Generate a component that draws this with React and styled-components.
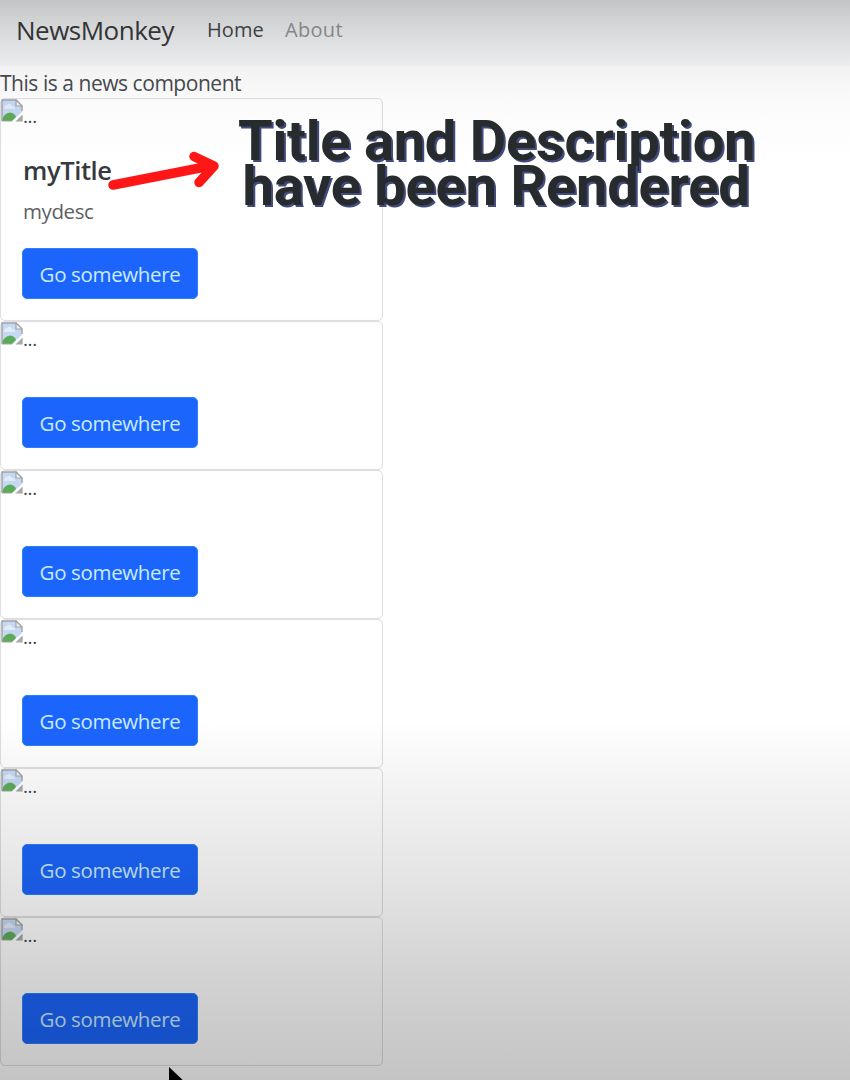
import React from "react";
import styled, { createGlobalStyle } from "styled-components";

const GlobalStyle = createGlobalStyle`
  * { box-sizing: border-box; }
  html, body { margin: 0; padding: 0; }
  body {
    background: #fff;
    color: #212529;
    font-family: "Open Sans", "Noto Sans", sans-serif;
    font-size: 21px;
    line-height: 32px;
    overflow: hidden;
  }
`;

const Page = styled.div`
  position: relative;
  height: 1080px;
  overflow: hidden;
`;

const Navbar = styled.nav`
  display: flex;
  align-items: center;
  height: 66px;
  padding: 0 16px 6px;
  background: #f8f9fa;
`;

const Brand = styled.a`
  width: 191px;
  font-size: 26px;
  letter-spacing: -0.5px;
  color: #3a3c40;
`;

const NavItem = styled.a`
  width: 78px;
  font-size: 20px;
  letter-spacing: ${(p) => p.$spacing}px;
  color: ${(p) => (p.$active ? "#484a4e" : "#98999b")};
`;

const NewsLine = styled.div`
  height: 32px;
  padding-top: 1px;
  color: #484b50;
  letter-spacing: -0.46px;
  white-space: nowrap;
`;

const Card = styled.article`
  width: 383px;
  height: ${(p) => (p.$filled ? 223 : 149)}px;
  border: 1px solid #dfdfe2;
  border-radius: 5px;
  box-shadow: inset 0 0 1px #e4e4e6;
`;

const ImageRow = styled.div`
  display: flex;
  height: 32px;
  line-height: 35px;
`;

const Alt = styled.span`
  font-size: 19px;
  letter-spacing: -0.4px;
  color: #3f4247;
`;

const CardBody = styled.div`
  padding: ${(p) => (p.$filled ? 23 : 43)}px 21px 20px;
`;

const CardTitle = styled.h5`
  margin: 0 0 9px 1px;
  font-size: 25.5px;
  font-weight: 600;
  line-height: 32px;
  letter-spacing: -0.4px;
  color: #36393d;
`;

const CardText = styled.p`
  margin: 0 0 21px 1px;
  font-size: 20.5px;
  letter-spacing: -0.4px;
  color: #5c5f63;
`;

const Button = styled.a`
  display: flex;
  align-items: center;
  justify-content: center;
  width: 176px;
  height: 51px;
  border: 1px solid #2b83fb;
  border-radius: 5px;
  background: #1c65fc;
  color: #c8ecff;
  font-size: 20.5px;
  letter-spacing: -0.35px;
  white-space: nowrap;
`;

const Shade = styled.div`
  position: absolute;
  inset: 0;
  pointer-events: none;
  background: linear-gradient(
    to bottom,
    rgba(0, 0, 0, 0.21) 0,
    rgba(0, 0, 0, 0.14) 25px,
    rgba(0, 0, 0, 0.075) 55px,
    rgba(0, 0, 0, 0.05) 66px,
    rgba(0, 0, 0, 0.018) 100px,
    rgba(0, 0, 0, 0) 160px,
    rgba(0, 0, 0, 0) 720px,
    rgba(0, 0, 0, 0.043) 780px,
    rgba(0, 0, 0, 0.11) 885px,
    rgba(0, 0, 0, 0.18) 985px,
    rgba(0, 0, 0, 0.23) 1080px
  );
`;

const Caption = styled.h1`
  position: absolute;
  top: 119px;
  left: 238px;
  width: 516px;
  margin: 0;
  font: 700 56px/45px Roboto, sans-serif;
  color: #272b2e;
  text-align: center;
  text-shadow: 2px 2px 0 #424b7c;
  white-space: nowrap;
`;

const CaptionLine = styled.span`
  display: block;
  letter-spacing: ${(p) => p.$spacing}px;
`;

const Arrow = styled.svg`
  position: absolute;
  top: 145px;
  left: 100px;
`;

const Cursor = styled.svg`
  position: absolute;
  top: 1066px;
  left: 168px;
`;

const BrokenImage = () => (
  <svg width="22" height="24" viewBox="0 0 22 24">
    <path d="M1 1H15L21 7V13L11 22H1Z" fill="#c6d9f3" />
    <path d="M3 9Q3 6 6 6Q9 3 11 7Q14 7 14 10H3Z" fill="#e2ecf9" />
    <path d="M1 21Q3 14 9 13.500Q14 14 15 18L11 22H1Z" fill="#5cab58" />
    <path d="M1 22V1H15L21 7V12" fill="none" stroke="#a0a3a8" strokeWidth="1.400" />
    <path d="M15 1V7H21Z" fill="#f5f5f6" stroke="#a0a3a8" strokeWidth="1.200" />
    <path d="M1 22H11M16 22H21V17Z" fill="#a9b9a9" stroke="#a0a3a8" strokeWidth="1.200" />
  </svg>
);

const articles = [{ title: "myTitle", description: "mydesc" }, {}, {}, {}, {}, {}];

function NewsItem({ title, description }) {
  const filled = Boolean(title);
  return (
    <Card $filled={filled}>
      <ImageRow>
        <BrokenImage />
        <Alt>...</Alt>
      </ImageRow>
      <CardBody $filled={filled}>
        {title && <CardTitle>{title}</CardTitle>}
        {description && <CardText>{description}</CardText>}
        <Button>Go somewhere</Button>
      </CardBody>
    </Card>
  );
}

export default function App() {
  return (
    <Page>
      <GlobalStyle />
      <Navbar>
        <Brand>NewsMonkey</Brand>
        <NavItem $active $spacing={0.05}>Home</NavItem>
        <NavItem $spacing={0.3}>About</NavItem>
      </Navbar>
      <NewsLine>This is a news component</NewsLine>
      {articles.map((article, i) => (
        <NewsItem key={i} {...article} />
      ))}
      <Shade />
      <Caption>
        <CaptionLine $spacing={-0.25}>Title and Description</CaptionLine>
        <CaptionLine $spacing={-0.25}>have been Rendered</CaptionLine>
      </Caption>
      <Arrow width="125" height="50" fill="none" stroke="#ff1717" strokeWidth="9.500" strokeLinecap="round" strokeLinejoin="round">
        <path d="M13 40L110 21M94 11.500L114 21L99 37.500" />
      </Arrow>
      <Cursor width="20" height="14">
        <path d="M1 1V24L7 19L20 19Z" fill="#000" />
      </Cursor>
    </Page>
  );
}
